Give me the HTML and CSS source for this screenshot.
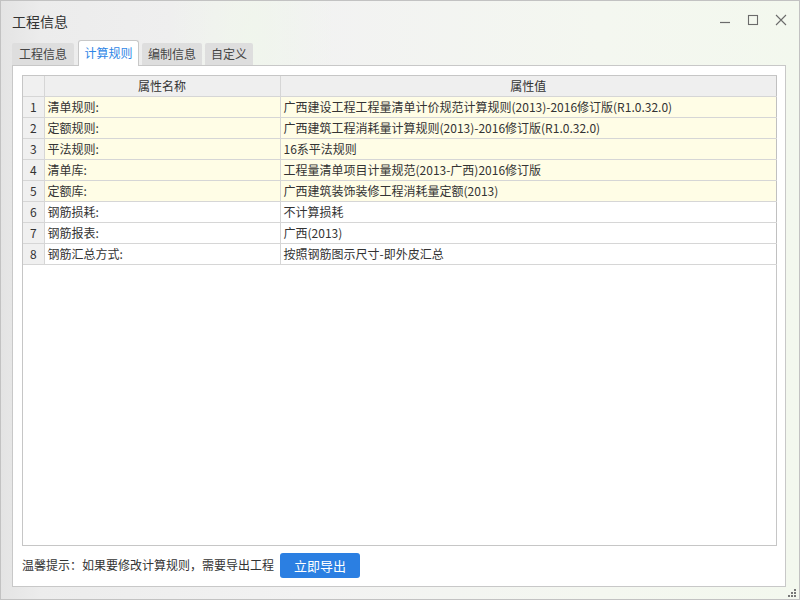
FILE: index.html
```html
<!DOCTYPE html>
<html lang="zh-CN">
<head>
<meta charset="utf-8">
<title>工程信息</title>
<link rel="stylesheet" href="styles.css">
</head>
<body>
<div class="window">
  <div class="titlebar">
    <span class="title">工程信息</span>
    <div class="controls">
      <svg class="ctl" width="12" height="12" viewBox="0 0 12 12"><path d="M1 8.5H11" stroke="#6b6b6b" stroke-width="1.2" fill="none"/></svg>
      <svg class="ctl" width="12" height="12" viewBox="0 0 12 12"><rect x="1.5" y="1.5" width="9" height="9" stroke="#6b6b6b" stroke-width="1.1" fill="none"/></svg>
      <svg class="ctl" width="12" height="12" viewBox="0 0 12 12"><path d="M1 1L11 11M11 1L1 11" stroke="#6b6b6b" stroke-width="1.1" fill="none"/></svg>
    </div>
  </div>
  <div class="tabs">
    <div class="tab">工程信息</div>
    <div class="tab active">计算规则</div>
    <div class="tab">编制信息</div>
    <div class="tab">自定义</div>
  </div>
  <div class="panel">
    <div class="grid">
      <table>
        <thead>
          <tr><th class="num"></th><th class="name">属性名称</th><th class="val">属性值</th></tr>
        </thead>
        <tbody>
          <tr class="hl"><td class="num">1</td><td>清单规则:</td><td>广西建设工程工程量清单计价规范计算规则(2013)-2016修订版(R1.0.32.0)</td></tr>
          <tr class="hl"><td class="num">2</td><td>定额规则:</td><td>广西建筑工程消耗量计算规则(2013)-2016修订版(R1.0.32.0)</td></tr>
          <tr class="hl"><td class="num">3</td><td>平法规则:</td><td>16系平法规则</td></tr>
          <tr class="hl"><td class="num">4</td><td>清单库:</td><td>工程量清单项目计量规范(2013-广西)2016修订版</td></tr>
          <tr class="hl"><td class="num">5</td><td>定额库:</td><td>广西建筑装饰装修工程消耗量定额(2013)</td></tr>
          <tr><td class="num">6</td><td>钢筋损耗:</td><td>不计算损耗</td></tr>
          <tr><td class="num">7</td><td>钢筋报表:</td><td>广西(2013)</td></tr>
          <tr><td class="num">8</td><td>钢筋汇总方式:</td><td>按照钢筋图示尺寸-即外皮汇总</td></tr>
        </tbody>
      </table>
    </div>
    <div class="footer">
      <span class="tip">温馨提示：如果要修改计算规则，需要导出工程</span>
      <button class="btn">立即导出</button>
    </div>
  </div>
  <svg class="grip" width="9" height="9" viewBox="0 0 9 9">
    <rect x="6" y="0" width="2" height="2" fill="#777"/>
    <rect x="3" y="3" width="2" height="2" fill="#777"/>
    <rect x="6" y="3" width="2" height="2" fill="#777"/>
    <rect x="0" y="6" width="2" height="2" fill="#777"/>
    <rect x="3" y="6" width="2" height="2" fill="#777"/>
    <rect x="6" y="6" width="2" height="2" fill="#777"/>
  </svg>
</div>
</body>
</html>
```

FILE: styles.css
```css
* { box-sizing: border-box; }
html, body { margin: 0; padding: 0; }
body {
  font-family: "Noto Sans CJK SC", "Noto Sans", sans-serif;
  color: #333;
  font-size: 12px;
}
.window {
  position: relative;
  width: 800px;
  height: 600px;
  border: 1px solid #c2c2c2;
  background:
    radial-gradient(ellipse 120px 300px at 250px 40px, rgba(240,246,236,0.9), rgba(240,246,236,0) 70%),
    linear-gradient(90deg, #e4e4e4 0px, #ececec 40px, #f2f2f2 300px, #f4f7f0 600px, #f3f8ee 800px);
  display: flex;
  flex-direction: column;
}
.titlebar {
  height: 38px;
  display: flex;
  align-items: flex-start;
  justify-content: space-between;
  padding: 10px 12px 0 11px;
}
.title {
  font-size: 14px;
  line-height: 20px;
  color: #333;
}
.controls {
  display: flex;
  gap: 16px;
  padding-top: 3px;
}
.tabs {
  display: flex;
  align-items: flex-end;
  gap: 3px;
  padding-left: 11px;
  height: 27px;
  margin-top: 1px;
}
.tab {
  height: 22px;
  line-height: 21px;
  padding: 0;
  background: #dedede;
  color: #444;
  font-size: 12px;
  border-radius: 2px 2px 0 0;
  width: 62px;
  text-align: center;
  white-space: nowrap;
}
.tab:nth-child(3) { width: 60px; }
.tab:nth-child(4) { width: 48px; }
.tab.active {
  height: 26px;
  line-height: 24px;
  background: #fff;
  color: #2f86e6;
  border: 1px solid #c8c8c8;
  border-bottom: none;
  border-radius: 3px 3px 0 0;
  width: 61px;
  margin-left: 1px;
  margin-bottom: -1px;
  position: relative;
  z-index: 1;
}
.panel {
  flex: 1;
  margin: 0 13px 12px 11px;
  background: #fff;
  border: 1px solid #c8c8c8;
  padding: 9px 8px 0 9px;
  display: flex;
  flex-direction: column;
}
.grid {
  height: 471px;
  border: 1px solid #c6c6c6;
  background: #fff;
}
table {
  border-collapse: collapse;
  width: 754px;
  table-layout: fixed;
}
th, td {
  border-right: 1px solid #d6d6d6;
  border-bottom: 1px solid #d6d6d6;
  padding: 0 0 0 3px;
  font-weight: normal;
  white-space: nowrap;
  overflow: hidden;
  text-align: left;
  font-size: 12px;
  color: #333;
}
th {
  height: 20px;
  line-height: 19px;
  background: #efefef;
  text-align: center;
  padding: 0;
}
td {
  height: 21px;
  line-height: 20px;
}
th.val, td:last-child { border-right: 1px solid #c0c0c0; }
.num {
  width: 21px;
  background: #f0f0f0;
  text-align: center;
  padding: 0;
}
th.name { width: 236px; }
tr.hl td { background: #fffde6; }
tr.hl td.num, td.num { background: #f0f0f0; }
.footer {
  display: flex;
  align-items: center;
  height: 40px;
  padding-bottom: 2px;
  gap: 6px;
}
.tip {
  font-size: 12px;
  color: #333;
  line-height: 18px;
}
.btn {
  width: 80px;
  height: 25px;
  border: none;
  border-radius: 3px;
  background: #2b7fe2;
  color: #fff;
  font-family: "Noto Sans CJK SC", "Noto Sans", sans-serif;
  font-size: 13px;
  line-height: 25px;
  padding: 0;
}
.grip {
  position: absolute;
  right: 2px;
  bottom: 1px;
}
```
